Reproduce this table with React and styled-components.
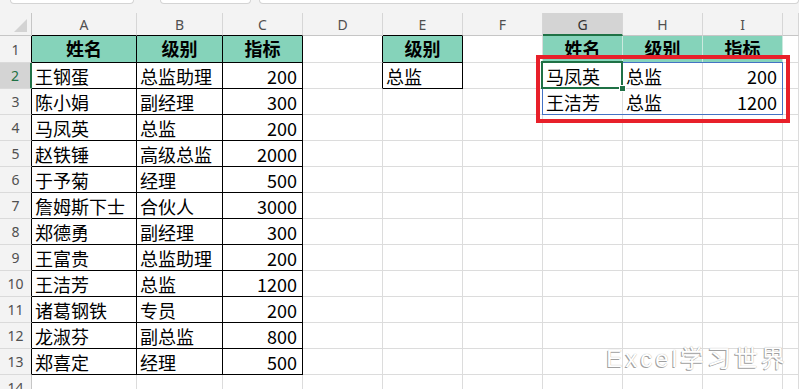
import React from 'react'
import styled, { createGlobalStyle } from 'styled-components'

const GlobalStyle = createGlobalStyle`
  html, body { margin: 0; padding: 0; background: #fff; }
  #root { height: 389px; overflow: hidden; }
`

const COLS = ['A', 'B', 'C', 'D', 'E', 'F', 'G', 'H', 'I', 'J']
const ROWS = 14

const GRID = '#dcdcdc'
const BLACK = '#000'
const GREEN = '#1f7145'
const HEAD_FILL = '#85d3ba'

const people = [
  ['王钢蛋', '总监助理', 200],
  ['陈小娟', '副经理', 300],
  ['马凤英', '总监', 200],
  ['赵铁锤', '高级总监', 2000],
  ['于予菊', '经理', 500],
  ['詹姆斯下士', '合伙人', 3000],
  ['郑德勇', '副经理', 300],
  ['王富贵', '总监助理', 200],
  ['王洁芳', '总监', 1200],
  ['诸葛钢铁', '专员', 200],
  ['龙淑芬', '副总监', 800],
  ['郑喜定', '经理', 500]
]

const values = {
  A1: '姓名', B1: '级别', C1: '指标',
  E1: '级别', E2: '总监',
  G1: '姓名', H1: '级别', I1: '指标',
  G2: '马凤英', H2: '总监', I2: 200,
  G3: '王洁芳', H3: '总监', I3: 1200
}
people.forEach((p, i) => {
  values[`A${i + 2}`] = p[0]
  values[`B${i + 2}`] = p[1]
  values[`C${i + 2}`] = p[2]
})

// which cells sit inside a bordered table
const inBoxed = (c, r) => (['A', 'B', 'C'].includes(c) && r <= 13) || (c === 'E' && r <= 2)
const isHead = (c, r) => r === 1 && ['A', 'B', 'C', 'E', 'G', 'H', 'I'].includes(c)

export default function App() {
  const cells = []
  for (let r = 1; r <= ROWS; r++) {
    cells.push(
      <RowHead key={`r${r}`} $row={r + 1} $active={r === 2} $edge={r <= 13 ? BLACK : '#c6c6c6'}>
        {r}
      </RowHead>
    )
    COLS.forEach((c, ci) => {
      const id = `${c}${r}`
      const v = values[id]
      const boxed = inBoxed(c, r)
      const head = isHead(c, r)
      let right = GRID
      if (boxed || (c === 'D' && r <= 2)) right = BLACK
      else if (head) right = '#cbe9de'
      cells.push(
        <Cell
          key={id}
          $row={r + 1}
          $col={ci + 2}
          $head={head}
          $num={typeof v === 'number'}
          $right={right}
          $bottom={boxed ? BLACK : head ? '#cbe9de' : GRID}
        >
          {v}
        </Cell>
      )
    })
  }

  return (
    <Page>
      <GlobalStyle />
      <TopStrip>
        <Tab $w={124} $gap={26} />
        <Tab $w={91} $gap={8} />
        <Tab $grow />
      </TopStrip>
      <Sheet>
        <Corner>
          <svg width="13" height="13" viewBox="0 0 13 13">
            <polygon points="13,0 13,13 0,13" fill="#d3d3d3" />
          </svg>
        </Corner>
        {COLS.map((c, ci) => (
          <ColHead
            key={c}
            $col={ci + 2}
            $active={c === 'G'}
            $edge={['A', 'B', 'C', 'E'].includes(c) ? BLACK : '#c6c6c6'}
          >
            {c === 'J' ? '' : c}
          </ColHead>
        ))}
        {cells}
        <RangeBox />
        <Selection />
        <Highlight />
        <Watermark>Excel学习世界</Watermark>
      </Sheet>
    </Page>
  )
}

const Page = styled.div`
  width: 799px;
  height: 389px;
  overflow: hidden;
  display: flex;
  flex-direction: column;
  background: #f3f3f3;
`

const TopStrip = styled.div`
  height: 13px;
  flex: none;
  display: flex;
  padding-left: 10px;
  background: #f3f3f3;
`

const Tab = styled.div`
  box-sizing: border-box;
  width: ${(p) => (p.$w ? `${p.$w}px` : 'auto')};
  flex: ${(p) => (p.$grow ? 1 : 'none')};
  height: 4px;
  margin-right: ${(p) => p.$gap || 0}px;
  background: #fff;
  border: 1px solid #d4d4d4;
  border-top: none;
  border-radius: 0 0 6px 6px;
`

const Sheet = styled.div`
  flex: 1;
  display: grid;
  grid-template-columns: 32px 105px 86px 80px 80px 80px 80px 80px 80px 80px 1fr;
  grid-template-rows: 23px 27px repeat(13, 26px);
  background: #fff;
  font-family: "Noto Sans CJK SC", "Microsoft YaHei", sans-serif;
  font-size: 18px;
  color: #000;
`

const Corner = styled.div`
  grid-row: 1;
  grid-column: 1;
  box-sizing: border-box;
  background: #f3f3f3;
  border-right: 1px solid #c6c6c6;
  border-bottom: 1px solid #c6c6c6;
  display: flex;
  align-items: flex-end;
  justify-content: flex-end;
  padding: 0 4px 3px 0;
`

const ColHead = styled.div`
  grid-row: 1;
  grid-column: ${(p) => p.$col};
  box-sizing: border-box;
  display: flex;
  align-items: center;
  justify-content: center;
  background: ${(p) => (p.$active ? '#d4d4d4' : '#f3f3f3')};
  border-right: 1px solid #d6d6d6;
  border-bottom: ${(p) => (p.$active ? `2px solid ${GREEN}` : `1px solid ${p.$edge}`)};
  font-family: "Noto Sans", "Liberation Sans", sans-serif;
  font-size: 14px;
  color: ${(p) => (p.$active ? '#333' : '#505050')};
  padding-top: 1px;
`

const RowHead = styled.div`
  grid-row: ${(p) => p.$row};
  grid-column: 1;
  box-sizing: border-box;
  display: flex;
  align-items: center;
  justify-content: center;
  background: ${(p) => (p.$active ? '#d4d4d4' : '#f3f3f3')};
  border-right: ${(p) => (p.$active ? `2px solid ${GREEN}` : `1px solid ${p.$edge}`)};
  border-bottom: 1px solid #dadada;
  font-family: "Noto Sans", "Liberation Sans", sans-serif;
  font-size: 14px;
  color: ${(p) => (p.$active ? GREEN : '#505050')};
`

const Cell = styled.div`
  grid-row: ${(p) => p.$row};
  grid-column: ${(p) => p.$col};
  box-sizing: border-box;
  display: flex;
  align-items: center;
  justify-content: ${(p) => (p.$head ? 'center' : p.$num ? 'flex-end' : 'flex-start')};
  padding: ${(p) => (p.$head ? '0 0 2px 0' : '0 5px 0 3px')};
  background: ${(p) => (p.$head ? HEAD_FILL : '#fff')};
  font-weight: ${(p) => (p.$head ? 700 : 400)};
  border-right: 1px solid ${(p) => p.$right};
  border-bottom: 1px solid ${(p) => p.$bottom};
  white-space: nowrap;
  overflow: hidden;
  line-height: 1;
`

// G2:I3 result range
const RangeBox = styled.div`
  grid-column: 8 / span 3;
  grid-row: 3 / span 2;
  margin: -1px 0 0 -1px;
  border: 1px solid #4472c4;
  pointer-events: none;
`

// active cell G2
const Selection = styled.div`
  grid-column: 8;
  grid-row: 3;
  margin: -2px 0 0 -2px;
  border: 2px solid ${GREEN};
  position: relative;
  pointer-events: none;

  &::after {
    content: '';
    position: absolute;
    right: -5px;
    bottom: -5px;
    width: 5px;
    height: 5px;
    background: ${GREEN};
    border: 1px solid #fff;
  }
`

const Highlight = styled.div`
  grid-column: 8 / span 3;
  grid-row: 3 / span 2;
  margin: -8px -7px -8px -7px;
  border: 4px solid #e8202a;
  pointer-events: none;
`

const Watermark = styled.div`
  grid-column: 8 / span 4;
  grid-row: 14;
  justify-self: end;
  align-self: start;
  margin: -3px 11px 0 0;
  font-family: "Liberation Sans", "Noto Sans CJK SC", sans-serif;
  font-size: 24px;
  letter-spacing: 3px;
  line-height: 26px;
  color: #fff;
  text-shadow: -1px 1px 0 #a0a0a0, 0 0 1px #9a9a9a;
  white-space: nowrap;
  pointer-events: none;
`
